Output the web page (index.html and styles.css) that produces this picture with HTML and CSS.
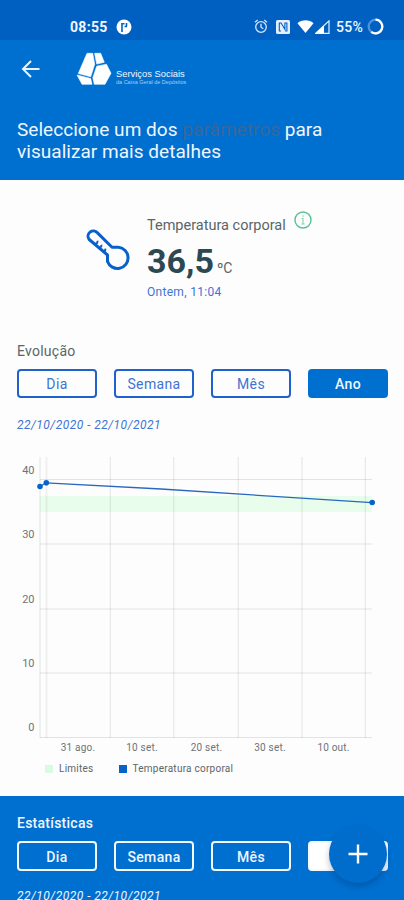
FILE: index.html
```
<!DOCTYPE html>
<html lang="pt">
<head>
    <meta charset="UTF-8">
    <meta name="viewport" content="width=device-width, initial-scale=1.0">
    <title>Temperatura corporal</title>
    <link rel="stylesheet" href="styles.css">
</head>
<body>
    <!-- Status bar -->
    <div class="status-bar">
        <div class="status-left">
            <span class="clock">08:55</span>
            <svg class="app-icon" width="16" height="16" viewBox="0 0 16 16">
                <circle cx="8" cy="8" r="7.5" fill="#fff"/>
                <path d="M6 13V4M6 4.800h2.500M10.500 4v3.200M8.500 7.500h2.500" fill="none" stroke="#0060c2" stroke-width="1.600"/>
            </svg>
        </div>
        <div class="status-right">
            <svg class="alarm" width="14" height="15" viewBox="0 0 14 15" fill="none" stroke="#d5e6fb" stroke-width="1.3">
                <circle cx="7" cy="8" r="5.3"/>
                <path d="M1 3.2l2.7-2.1M13 3.2l-2.7-2.1M7 4.8v3.4l2.3 1.5"/>
            </svg>
            <svg class="nfc" width="14" height="14" viewBox="0 0 14 14">
                <rect width="14" height="14" rx="1.5" fill="#e4eefc"/>
                <path d="M5 11H3.3V3h1.8l3.8 6.2V3h2v8H9.2" fill="none" stroke="#0060c2" stroke-width="1.1"/>
            </svg>
            <svg class="wifi" width="17" height="13" viewBox="0 0 17 13">
                <path d="M.5 3.2C5-.6 12-.6 16.500 3.200L8.500 13z" fill="#fff"/>
            </svg>
            <svg class="signal" width="15" height="14" viewBox="0 0 15 14">
                <path d="M.8 13.300L14 .9v12.400z" fill="none" stroke="#e4eefc" stroke-width="1.2"/>
                <path d="M.5 13.500L9 5.500v8z" fill="#fff"/>
            </svg>
            <span class="battery">55%</span>
            <svg class="battery-ring" width="17" height="17" viewBox="0 0 17 17" fill="none" stroke-width="2.3">
                <circle cx="8.5" cy="8.5" r="6.800" stroke="#4e91dc"/>
                <path d="M8.500 1.700a6.800 6.800 0 1 1-4.300 12.100" stroke="#fff"/>
            </svg>
        </div>
    </div>

    <!-- Header -->
    <header class="header">
        <div class="brand-row">
            <svg class="back" width="20" height="18" viewBox="0 0 20 18" fill="none" stroke="#eaf3ff" stroke-width="2">
                <path d="M18.500 9H2.500M10 1L2 9l8 8"/>
            </svg>
            <svg class="logo" width="36" height="33" viewBox="0 0 36 33" fill="#fff" stroke="#fff" stroke-width="0.6" stroke-linejoin="round">
                <path d="M11 1.300h5.700l2 11-4 12.500L2.300 21.500z"/>
                <path d="M18.600 1.300h6.100l3.600 9-7.600 1.800z"/>
                <path d="M20.700 14.200l9.800-2 4.500 9.100-6 11H18.300l-1.500-6.600z"/>
                <path d="M1 23l13.700 3.500 1.300 5.800H6z"/>
            </svg>
            <div class="brand">
                <div class="brand-name">Serviços Sociais</div>
                <div class="brand-sub">da Caixa Geral de Depósitos</div>
            </div>
        </div>
        <h1 class="title">Seleccione um dos <span class="muted">parâmetros</span> para<br>visualizar mais detalhes</h1>
    </header>

    <!-- Current value -->
    <section class="reading">
        <svg class="thermometer" width="44" height="44" viewBox="0 0 44 44" fill="none" stroke="#0860ca" stroke-width="3" stroke-linejoin="round">
            <path d="M3.200 10.500a5.300 5.300 0 0 1 8.300-6.600L26 18.300h6.500a10.600 10.600 0 1 1-11 14.200V26z"/>
            <path d="M8.800 14.800q3.200 0 2.600-3M12.700 18.700q3.200 0 2.600-3M16.600 22.600q3.200 0 2.600-3" stroke-width="2"/>
        </svg>
        <div class="reading-text">
            <div class="reading-label">
                <span class="reading-name">Temperatura corporal</span>
                <svg class="info" width="18" height="18" viewBox="0 0 18 18" fill="none" stroke="#57c394">
                    <circle cx="9" cy="9" r="8" stroke-width="1.400"/>
                    <path d="M7.500 7.500H9v5.500M7.300 13h3.500M9 4.200v1.500" stroke="#8bcfb0" stroke-width="1.100"/>
                </svg>
            </div>
            <div class="reading-value"><span class="number">36,5</span><span class="unit">ºC</span></div>
            <div class="reading-time">Ontem, 11:04</div>
        </div>
    </section>

    <!-- Evolution -->
    <section class="evolution">
        <h2 class="section-title">Evolução</h2>
        <div class="tabs">
            <button class="tab">Dia</button>
            <button class="tab">Semana</button>
            <button class="tab">Mês</button>
            <button class="tab active">Ano</button>
        </div>
        <div class="range">22/10/2020 - 22/10/2021</div>
    </section>

    <svg class="chart" width="404" height="302" viewBox="0 0 404 302">
        <rect x="40" y="41" width="332" height="16" fill="#e8fdeb"/>
        <g class="grid">
            <path d="M40 24.500h332M40 89h332M40 154h332M40 218h332M40 282.500h332"/>
            <path d="M40 2v281M110.300 2v281M173.800 2v281M238.200 2v281M302 2v281M365.300 2v281"/>
            <path d="M46.500 2v281" class="faint"/>
        </g>
        <path d="M40 31.500l6-3.700 115 6.200 211 13.700" fill="none" stroke="#2968bd" stroke-width="1.300"/>
        <g fill="#0863c9">
            <circle cx="40" cy="31.500" r="2.800"/>
            <circle cx="46.300" cy="27.800" r="2.800"/>
            <circle cx="372.200" cy="47.500" r="2.800"/>
        </g>
        <g class="axis-y">
            <text x="34.500" y="19">40</text>
            <text x="34.500" y="83">30</text>
            <text x="34.500" y="148">20</text>
            <text x="34.500" y="212">10</text>
            <text x="34.500" y="276">0</text>
        </g>
        <g class="axis-x">
            <text x="78" y="296">31 ago.</text>
            <text x="142" y="296">10 set.</text>
            <text x="206.500" y="296">20 set.</text>
            <text x="270" y="296">30 set.</text>
            <text x="333.500" y="296">10 out.</text>
        </g>
    </svg>
    <div class="legend">
        <span class="legend-item limits">Limites</span>
        <span class="legend-item temperature">Temperatura corporal</span>
    </div>

    <!-- Statistics -->
    <section class="stats">
        <h2 class="section-title">Estatísticas</h2>
        <div class="tabs">
            <button class="tab">Dia</button>
            <button class="tab">Semana</button>
            <button class="tab">Mês</button>
            <button class="tab active" aria-label="Ano"></button>
        </div>
        <div class="range">22/10/2020 - 22/10/2021</div>
    </section>

    <button class="fab" aria-label="Adicionar">
        <svg width="20" height="20" viewBox="0 0 20 20" stroke="#fff" stroke-width="2.400">
            <path d="M10 .5v19M.5 10h19"/>
        </svg>
    </button>
</body>
</html>
```
FILE: styles.css
```
* {
    box-sizing: border-box;
}

body {
    margin: 0;
    width: 404px;
    height: 900px;
    overflow: hidden;
    position: relative;
    background-color: #fdfdfe;
    font-family: Roboto, sans-serif;
    color: #5b6568;
}

svg {
    display: block;
    flex-shrink: 0;
}

/* Status bar */
.status-bar {
    display: flex;
    justify-content: space-between;
    height: 40px;
    padding: 13px 20px 0 70px;
    background-color: #0060c2;
    color: #f0f6ff;
    font-size: 14px;
    font-weight: 700;
}

.status-left,
.status-right {
    display: flex;
    align-items: center;
    height: 27px;
}

.clock {
    width: 38px;
    letter-spacing: 0.3px;
}

.app-icon {
    margin-left: 8px;
}

.nfc {
    margin-left: 8px;
}

.wifi {
    margin-left: 7px;
}

.signal {
    margin-left: 1px;
}

.battery {
    margin-left: 6px;
    font-weight: 500;
    letter-spacing: 0.3px;
}

.battery-ring {
    margin-left: 4px;
}

/* Header */
.header {
    height: 140px;
    padding: 12px 17px 0;
    background-color: #0070d0;
    color: #f0f6ff;
}

.brand-row {
    display: flex;
    height: 36px;
}

.back {
    margin: 8px 0 0 4px;
}

.logo {
    margin-left: 35px;
}

.brand {
    margin: 16px 0 0 4px;
    white-space: nowrap;
}

.brand-name {
    font-family: "Liberation Sans", sans-serif;
    font-size: 9.4px;
    line-height: 11px;
}

.brand-sub {
    font-family: "Liberation Sans", sans-serif;
    font-size: 5.5px;
    line-height: 6px;
    color: #a9cdf2;
}

.title {
    margin: 31px 0 0;
    font-size: 19px;
    font-weight: 400;
    line-height: 22px;
    letter-spacing: 0.04px;
    white-space: nowrap;
}

.muted {
    color: #3a679b;
}

/* Current value */
.reading {
    display: flex;
    height: 162px;
    padding: 31px 0 0 86px;
}

.thermometer {
    margin-top: 18px;
}

.reading-text {
    margin-left: 17px;
}

.reading-label {
    display: flex;
    height: 25px;
    font-size: 14.5px;
}

.reading-name {
    margin-top: 6px;
    line-height: 18px;
}

.info {
    margin-left: 8px;
}

.reading-value {
    height: 48px;
    line-height: 50px;
}

.number {
    font-size: 34px;
    font-weight: 700;
    color: #2c4852;
}

.unit {
    margin-left: 3px;
    font-size: 14px;
}

.reading-time {
    font-size: 12px;
    line-height: 16px;
    letter-spacing: 0.3px;
    color: #3e74d2;
}

/* Evolution */
.evolution {
    height: 113px;
    padding: 0 16px 0 17px;
}

.section-title {
    margin: 0;
    font-size: 14px;
    font-weight: 400;
    line-height: 18px;
    letter-spacing: 0.25px;
}

.tabs {
    display: grid;
    grid-template-columns: repeat(4, 80px);
    gap: 17px;
    margin-top: 9px;
}

.tab {
    height: 29px;
    padding: 2px 0 0;
    border: 2px solid #2062cb;
    border-radius: 4px;
    background: none;
    font-family: inherit;
    font-size: 14px;
    line-height: 23px;
    letter-spacing: 0.35px;
    color: #3e74d2;
}

.tab.active {
    border-color: #0070d0;
    background-color: #0070d0;
    color: #f0f6ff;
    font-weight: 500;
}

.range {
    margin-top: 19px;
    font-size: 12px;
    font-style: italic;
    line-height: 16px;
    letter-spacing: 0.48px;
    color: #3e74d2;
}

/* Chart */
.grid path {
    stroke: #000;
    stroke-opacity: 0.1;
}

.grid .faint {
    stroke-opacity: 0.05;
    stroke-width: 2px;
}

.axis-y text,
.axis-x text {
    fill: #6d7477;
}

.axis-y text {
    font-size: 11px;
    text-anchor: end;
}

.axis-x text {
    font-size: 10px;
    letter-spacing: 0.2px;
    text-anchor: middle;
}

.legend {
    display: flex;
    gap: 25px;
    height: 39px;
    padding: 6px 0 0 45px;
    font-size: 10px;
    line-height: 12px;
}

.legend-item {
    display: flex;
    align-items: center;
    height: 12px;
    letter-spacing: 0.25px;
}

.legend-item::before {
    content: "";
    width: 8px;
    height: 8px;
    margin-right: 6px;
    background-color: #d8fce1;
}

.temperature::before {
    background-color: #0863c9;
}

/* Statistics */
.stats {
    height: 104px;
    padding: 18px 16px 0 17px;
    background-color: #0070d0;
    color: #f0f6ff;
}

.stats .section-title {
    font-weight: 500;
}

.stats .tab {
    height: 30px;
    border-color: #f4f8ff;
    color: #f0f6ff;
    font-weight: 500;
}

.stats .tab.active {
    background-color: #fff;
}

.stats .range {
    margin-top: 17px;
    color: #f0f6ff;
}

/* Floating button */
.fab {
    position: absolute;
    left: 329px;
    top: 825px;
    display: flex;
    align-items: center;
    justify-content: center;
    width: 58px;
    height: 58px;
    padding: 0;
    border: 0;
    border-radius: 50%;
    background-color: #006ccc;
    box-shadow: 0 4px 6px rgba(0, 40, 90, 0.28);
}
```
